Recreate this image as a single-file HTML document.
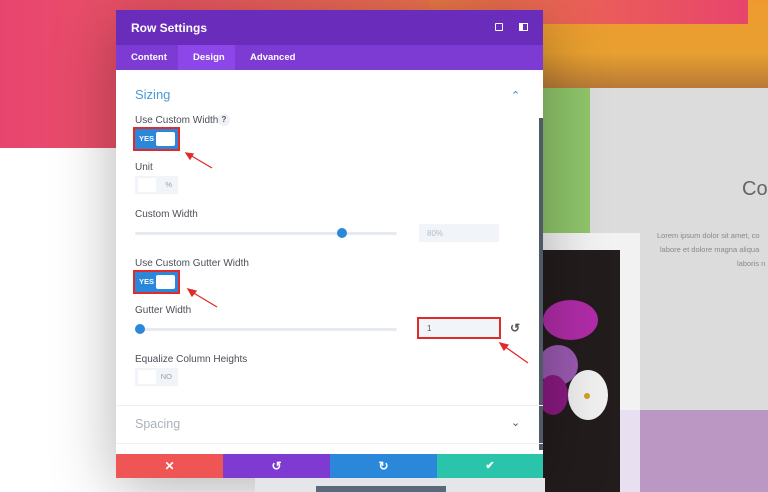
<!DOCTYPE html>
<html><head><style>
*{box-sizing:border-box;margin:0;padding:0}
body{width:768px;height:492px;overflow:hidden;position:relative;background:#fff;font-family:"Liberation Sans",sans-serif}
.a{position:absolute}
.lbl{position:absolute;left:135px;font-size:10px;color:#4a4f57}
.tog{position:absolute;left:135px;width:43px;height:20px;background:#2b87da;outline:2px solid #e02b2b;outline-offset:0}
.tog b{position:absolute;left:4px;top:5px;font-size:7.5px;color:#fff}
.tog i{position:absolute;right:3px;top:3px;width:19px;height:14px;background:#fff;border-radius:2px}
.off{position:absolute;left:135px;width:43px;height:18px;background:#f1f4f8}
.off i{position:absolute;left:3px;top:2px;width:18px;height:14px;background:#fff}
.off b{position:absolute;right:6px;top:4px;font-size:7.5px;color:#9aa3ad;font-weight:normal}
.track{position:absolute;left:135px;width:262px;height:3px;background:#e6ebf2;border-radius:2px}
.dot{position:absolute;width:10px;height:10px;border-radius:50%;background:#2b87da}
.inp{position:absolute;left:419px;width:80px;height:18px;background:#f1f4f8;font-size:8px;color:#b5bcc4;padding:5px 8px}
.lo{position:absolute;font-size:7.5px;color:#888;white-space:nowrap}
</style></head><body>
<div class="a" style="left:0;top:0;width:600px;height:148px;background:linear-gradient(90deg,#e84470,#ec6a55 60%,#ef8a3c)"></div>
<div class="a" style="left:543px;top:0;width:225px;height:88px;background:linear-gradient(180deg,#ef9a30,#e8a030 60%,#b87a36)"></div>
<div class="a" style="left:430px;top:0;width:318px;height:24px;background:linear-gradient(90deg,#ed7a45,#e8446c)"></div>
<div class="a" style="left:590px;top:88px;width:178px;height:322px;background:#dcdcdc"></div>
<div class="a" style="left:543px;top:88px;width:47px;height:147px;background:#8fc56a"></div>
<div class="a" style="left:543px;top:233px;width:97px;height:259px;background:#f2f2f2"></div>
<div class="a" style="left:640px;top:410px;width:128px;height:82px;background:#ba98c3"></div>
<div class="a" style="left:543px;top:410px;width:97px;height:82px;background:#e8dff0"></div>
<div class="a" style="left:543px;top:250px;width:77px;height:242px;background:#231c1c;overflow:hidden">
 <div class="a" style="left:0;top:50px;width:55px;height:40px;border-radius:50%;background:#b02ca8"></div>
 <div class="a" style="left:-5px;top:95px;width:40px;height:40px;border-radius:50%;background:#9a5ab0"></div>
 <div class="a" style="left:-5px;top:125px;width:30px;height:40px;border-radius:50%;background:#8a1a80"></div>
 <div class="a" style="left:25px;top:120px;width:40px;height:50px;border-radius:50%;background:#f0f0f0"></div>
 <div class="a" style="left:41px;top:143px;width:6px;height:6px;border-radius:50%;background:#d0a020"></div>
</div>
<div class="a" style="left:742px;top:178px;font-size:20px;color:#666">Co</div>
<div class="lo" style="left:657px;top:231px">Lorem ipsum dolor sit amet, co</div>
<div class="lo" style="left:660px;top:245px">labore et dolore magna aliqua</div>
<div class="lo" style="left:737px;top:259px">laboris n</div>

<div class="a" style="left:116px;top:10px;width:427px;height:468px;background:#fff;box-shadow:0 10px 60px rgba(0,0,0,.3)"></div>
<div class="a" style="left:116px;top:10px;width:427px;height:35px;background:#6a2cba"></div>
<div class="a" style="left:131px;top:21px;font-size:12px;color:#fff;font-weight:bold">Row Settings</div>
<div class="a" style="left:495px;top:23px;width:8px;height:8px;border:1.5px solid #fff;border-radius:1px"></div>
<div class="a" style="left:519px;top:23px;width:9px;height:8px;border:1.5px solid #fff;border-left-width:4px"></div>
<div class="a" style="left:116px;top:45px;width:427px;height:25px;background:#7d3bd4"></div>
<div class="a" style="left:178px;top:45px;width:57px;height:25px;background:#8d47e8"></div>
<div class="a" style="left:131px;top:52px;font-size:9.5px;color:#fff;font-weight:bold">Content</div>
<div class="a" style="left:193px;top:52px;font-size:9.5px;color:#fff;font-weight:bold">Design</div>
<div class="a" style="left:250px;top:52px;font-size:9.5px;color:#fff;font-weight:bold">Advanced</div>
<div class="a" style="left:539px;top:118px;width:4px;height:332px;background:#4e5a66"></div>

<div class="a" style="left:135px;top:87px;font-size:13px;color:#4a9ad8">Sizing</div>
<div class="a" style="left:511px;top:89px;font-size:11px;color:#2b87da">&#8963;</div>
<div class="lbl" style="top:115px">Use Custom Width</div>
<div class="a" style="left:218px;top:114px;width:12px;height:12px;border-radius:50%;background:#eef1f5;font-size:8px;font-weight:bold;color:#555;text-align:center;line-height:12px">?</div>
<div class="tog" style="top:129px"><b>YES</b><i></i></div>
<div class="lbl" style="top:162px">Unit</div>
<div class="off" style="top:176px"><i></i><b>%</b></div>
<div class="lbl" style="top:209px">Custom Width</div>
<div class="track" style="top:232px"></div><div class="dot" style="left:337px;top:228px"></div>
<div class="inp" style="top:224px">80%</div>
<div class="lbl" style="top:258px">Use Custom Gutter Width</div>
<div class="tog" style="top:272px"><b>YES</b><i></i></div>
<div class="lbl" style="top:305px">Gutter Width</div>
<div class="track" style="top:328px"></div><div class="dot" style="left:135px;top:324px"></div>
<div class="inp" style="top:319px;outline:2px solid #e02b2b;color:#555">1</div>
<div class="a" style="left:510px;top:321px;font-size:12px;color:#555;font-weight:bold">&#8634;</div>
<div class="lbl" style="top:354px">Equalize Column Heights</div>
<div class="off" style="top:368px"><i></i><b>NO</b></div>
<div class="a" style="left:116px;top:405px;width:427px;height:1px;background:#eef0f3"></div>
<div class="a" style="left:135px;top:417px;font-size:12.5px;color:#aab2bb">Spacing</div>
<div class="a" style="left:511px;top:416px;font-size:11px;color:#555">&#8964;</div>
<div class="a" style="left:116px;top:443px;width:427px;height:1px;background:#eef0f3"></div>

<div class="a" style="left:116px;top:454px;width:107px;height:24px;background:#ef5555;color:#fff;text-align:center;font-size:12px;font-weight:bold;line-height:24px">&#10005;</div>
<div class="a" style="left:223px;top:454px;width:107px;height:24px;background:#7f3bd1;color:#fff;text-align:center;font-size:12px;font-weight:bold;line-height:24px">&#8634;</div>
<div class="a" style="left:330px;top:454px;width:107px;height:24px;background:#2b87da;color:#fff;text-align:center;font-size:12px;font-weight:bold;line-height:24px">&#8635;</div>
<div class="a" style="left:437px;top:454px;width:106px;height:24px;background:#29c4a9;color:#fff;text-align:center;font-size:11px;font-weight:bold;line-height:24px">&#10004;</div>
<div class="a" style="left:255px;top:478px;width:290px;height:14px;background:#e4e6e9"></div>
<div class="a" style="left:316px;top:486px;width:130px;height:6px;background:#5a6a7a"></div>

<svg class="a" style="left:0;top:0" width="768" height="492">
<g stroke="#e02b2b" stroke-width="1.3" fill="#e02b2b">
<line x1="212" y1="168" x2="190" y2="155"/><polygon points="186,153 193,154 190,159"/>
<line x1="217" y1="307" x2="192" y2="292"/><polygon points="188,289 196,291 192,296"/>
<line x1="528" y1="363" x2="504" y2="346"/><polygon points="500,343 508,345 504,350"/>
</g></svg>
</body></html>
